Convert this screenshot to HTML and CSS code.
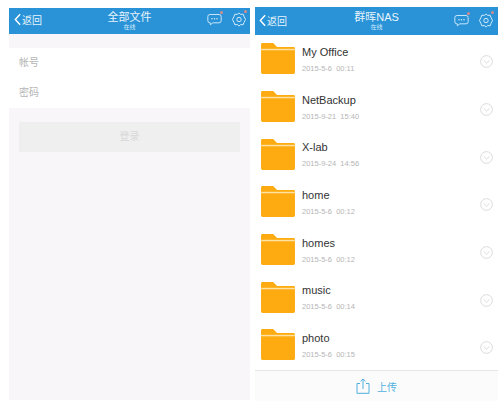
FILE: index.html
```html
<!DOCTYPE html>
<html lang="en">
<head>
    <meta charset="UTF-8">
    <meta name="viewport" content="width=device-width, initial-scale=1.0">
    <title>群晖NAS</title>
    <link rel="stylesheet" href="styles.css">
</head>
<body>
    <svg class="defs" width="0" height="0">
        <symbol id="chat" viewBox="0 0 18 14">
            <path d="M3.5 1h11A2.500 2.500 0 0 1 17 3.500v5a2.500 2.500 0 0 1-2.500 2.500H7l-3 2.300V11h-.5A2.500 2.500 0 0 1 1 8.500v-5A2.500 2.500 0 0 1 3.500 1z" fill="none" stroke="#d5ecf9" stroke-width="1.100"/>
            <circle cx="6" cy="6" r=".9" fill="#d5ecf9"/><circle cx="9" cy="6" r=".9" fill="#d5ecf9"/><circle cx="12" cy="6" r=".9" fill="#d5ecf9"/>
        </symbol>
        <symbol id="gear" viewBox="0 0 16 17">
            <path d="M8 1l2 1.700 2.700-.3 1 2.600L15.500 8.500l-1.800 3.400-1 2.700-2.700-.4L8 16l-2-1.800-2.700.4-1-2.700L.5 8.500 2.300 5l1-2.600 2.700.3z" fill="none" stroke="#d5ecf9" stroke-width="1.100" stroke-linejoin="round"/>
            <circle cx="8" cy="8.500" r="2.500" fill="none" stroke="#d5ecf9" stroke-width="1.100"/>
        </symbol>
        <symbol id="folder" viewBox="0 0 35 32">
            <path d="M1.500 0h11l4 4H33.500A1.500 1.500 0 0 1 35 5.500v25a1.500 1.500 0 0 1-1.500 1.500h-32A1.500 1.500 0 0 1 0 30.500v-29A1.500 1.500 0 0 1 1.500 0z" fill="#fdab10"/>
            <rect x="0" y="6" width="35" height="1.500" fill="#fde2a4"/>
        </symbol>
        <symbol id="more" viewBox="0 0 14 14">
            <circle cx="7" cy="7" r="6.300" fill="none" stroke="#d4d4d4" stroke-width=".9"/>
            <path d="M3.800 5.800L7 8.800l3.200-3" fill="none" stroke="#d4d4d4" stroke-width=".9"/>
        </symbol>
    </svg>

    <div class="page">
        <!-- login screen -->
        <div class="phone phone-left">
            <div class="topbar">
                <div class="back">
                    <svg class="back-arrow" viewBox="0 0 8 14"><path d="M7 1L1.500 7 7 13" fill="none" stroke="#fff" stroke-width="1.600"/></svg>
                    <span>返回</span>
                </div>
                <div class="title">
                    <div class="title-main">全部文件</div>
                    <div class="title-sub">在线</div>
                </div>
                <div class="actions">
                    <span class="action"><svg class="icon-chat"><use href="#chat"/></svg><i class="dot"></i></span>
                    <span class="action"><svg class="icon-gear"><use href="#gear"/></svg><i class="dot"></i></span>
                </div>
            </div>
            <div class="form">
                <div class="field">帐号</div>
                <div class="field">密码</div>
            </div>
            <div class="login-wrap">
                <div class="login-btn">登录</div>
            </div>
        </div>

        <!-- file list -->
        <div class="phone phone-right">
            <div class="topbar">
                <div class="back">
                    <svg class="back-arrow" viewBox="0 0 8 14"><path d="M7 1L1.500 7 7 13" fill="none" stroke="#fff" stroke-width="1.600"/></svg>
                    <span>返回</span>
                </div>
                <div class="title">
                    <div class="title-main">群晖NAS</div>
                    <div class="title-sub">在线</div>
                </div>
                <div class="actions">
                    <span class="action"><svg class="icon-chat"><use href="#chat"/></svg><i class="dot"></i></span>
                    <span class="action"><svg class="icon-gear"><use href="#gear"/></svg><i class="dot"></i></span>
                </div>
            </div>
            <div class="files">
                <div class="file"><svg class="folder"><use href="#folder"/></svg><div class="file-info"><div class="file-name">My Office</div><div class="file-date">2015-5-6&nbsp;&nbsp;00:11</div></div><svg class="more"><use href="#more"/></svg></div>
                <div class="file"><svg class="folder"><use href="#folder"/></svg><div class="file-info"><div class="file-name">NetBackup</div><div class="file-date">2015-9-21&nbsp;&nbsp;15:40</div></div><svg class="more"><use href="#more"/></svg></div>
                <div class="file"><svg class="folder"><use href="#folder"/></svg><div class="file-info"><div class="file-name">X-lab</div><div class="file-date">2015-9-24&nbsp;&nbsp;14:56</div></div><svg class="more"><use href="#more"/></svg></div>
                <div class="file"><svg class="folder"><use href="#folder"/></svg><div class="file-info"><div class="file-name">home</div><div class="file-date">2015-5-6&nbsp;&nbsp;00:12</div></div><svg class="more"><use href="#more"/></svg></div>
                <div class="file"><svg class="folder"><use href="#folder"/></svg><div class="file-info"><div class="file-name">homes</div><div class="file-date">2015-5-6&nbsp;&nbsp;00:12</div></div><svg class="more"><use href="#more"/></svg></div>
                <div class="file"><svg class="folder"><use href="#folder"/></svg><div class="file-info"><div class="file-name">music</div><div class="file-date">2015-5-6&nbsp;&nbsp;00:14</div></div><svg class="more"><use href="#more"/></svg></div>
                <div class="file"><svg class="folder"><use href="#folder"/></svg><div class="file-info"><div class="file-name">photo</div><div class="file-date">2015-5-6&nbsp;&nbsp;00:15</div></div><svg class="more"><use href="#more"/></svg></div>
            </div>
            <div class="upload">
                <svg class="upload-icon" viewBox="0 0 14 16"><path d="M4 5.500H1v9.800h12V5.500h-3M7 11V1M4.500 3.300L7 1l2.500 2.300" fill="none" stroke="#4fb0de" stroke-width="1"/></svg>
                <span>上传</span>
            </div>
        </div>
    </div>
</body>
</html>
```

FILE: styles.css
```css
html, body {
    margin: 0;
    padding: 0;
    background-color: #fff;
}
body {
    font-family: "Liberation Sans", "Noto Sans CJK SC", sans-serif;
    width: 499px;
    height: 403px;
    overflow: hidden;
}
.defs {
    display: block;
    height: 0;
}
.page {
    display: flex;
    padding-top: 8px;
    height: 395px;
    box-sizing: border-box;
}
.phone {
    display: flex;
    flex-direction: column;
}
.phone-left {
    width: 241px;
    margin-left: 9px;
    height: 392px;
    background-color: #f9f6f9;
}
.phone-right {
    width: 243px;
    margin-left: 5px;
    margin-top: -1px;
    height: 394px;
    background-color: #fff;
}
.topbar {
    display: flex;
    align-items: center;
    justify-content: space-between;
    position: relative;
    height: 26px;
    flex-shrink: 0;
    background-color: #2a93d8;
    color: #fff;
    box-sizing: border-box;
    padding-bottom: 3px;
}
.phone-right .topbar {
    height: 28px;
    padding-bottom: 2px;
}
.back {
    display: flex;
    align-items: center;
    padding-left: 5px;
    font-size: 10px;
    color: #e6f3fb;
}
.back-arrow {
    width: 7px;
    height: 13px;
    margin-right: 1px;
}
.phone-right .back {
    padding-left: 4px;
}
.title {
    position: absolute;
    left: 0;
    right: 0;
    top: 3px;
    text-align: center;
    pointer-events: none;
}
.phone-right .title {
    top: 4px;
}
.title-main {
    font-size: 11px;
    line-height: 13px;
    color: #e8f4fb;
}
.title-sub {
    font-size: 6px;
    line-height: 7px;
    color: #d5ecf9;
}
.actions {
    display: flex;
    align-items: center;
    gap: 10px;
    padding-right: 4px;
}
.phone-right .actions {
    padding-right: 5px;
}
.action {
    position: relative;
    display: flex;
}
.icon-chat {
    width: 15px;
    height: 13px;
}
.icon-gear {
    width: 14px;
    height: 15px;
}
.dot {
    position: absolute;
    top: -2px;
    right: -1px;
    width: 3px;
    height: 3px;
    border-radius: 50%;
    background-color: #d98a8a;
}
.form {
    margin-top: 14px;
    background-color: #fff;
    padding: 0 10px;
}
.field {
    height: 30px;
    line-height: 30px;
    font-size: 10px;
    color: #b5b5b5;
}
.login-wrap {
    padding: 14px 10px;
}
.login-btn {
    height: 30px;
    line-height: 30px;
    text-align: center;
    font-size: 10px;
    color: #d8d8d8;
    background-color: #efeff0;
}
.files {
    flex: 1;
}
.file {
    display: flex;
    align-items: center;
    height: 47.700px;
    padding: 0 5px 0 6px;
}
.folder {
    width: 34px;
    height: 31px;
    flex-shrink: 0;
}
.file-info {
    flex: 1;
    margin-left: 7px;
}
.file-name {
    font-size: 11px;
    line-height: 14px;
    color: #333;
}
.file-date {
    margin-top: 5px;
    font-size: 7.500px;
    line-height: 9px;
    color: #b5b5b5;
}
.more {
    width: 13px;
    height: 13px;
    flex-shrink: 0;
    margin-top: 6px;
}
.upload {
    height: 30px;
    flex-shrink: 0;
    display: flex;
    align-items: center;
    justify-content: center;
    gap: 7px;
    border-top: 1px solid #e6e6e6;
    background-color: #fbfbfb;
    font-size: 10px;
    color: #4fb0de;
}
.upload-icon {
    width: 14px;
    height: 16px;
}
```
